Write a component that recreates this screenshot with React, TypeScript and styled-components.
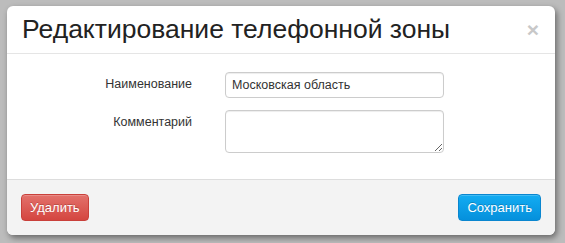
import styled, { createGlobalStyle } from 'styled-components';

const GlobalStyle = createGlobalStyle`
  html, body {
    margin: 0;
    padding: 0;
    background: #bcbcbc;
    font-family: "Liberation Sans", Arial, sans-serif;
  }
`;

const Page = styled.div`
  width: 565px;
  height: 243px;
  padding: 6px 0 0 7px;
  box-sizing: border-box;
`;

const Modal = styled.div`
  width: 548px;
  height: 229px;
  background: #fff;
  border-radius: 6px;
  box-shadow: 2px 3px 6px rgba(0, 0, 0, 0.45);
  display: flex;
  flex-direction: column;
  overflow: hidden;
`;

const ModalHeader = styled.div`
  height: 48px;
  box-sizing: border-box;
  padding: 0 15px;
  border-bottom: 1px solid #e5e5e5;
  display: flex;
  align-items: center;
  justify-content: space-between;
`;

const Title = styled.h3`
  margin: 0;
  font-size: 26.5px;
  font-weight: normal;
  color: #222;
  line-height: 30px;
  padding-bottom: 2px;
`;

const CloseButton = styled.button`
  border: none;
  background: none;
  padding: 0;
  margin-right: 1px;
  font-family: "Liberation Sans", Arial, sans-serif;
  font-size: 21px;
  font-weight: bold;
  line-height: 20px;
  color: #c8c8c8;
  cursor: pointer;
`;

const ModalBody = styled.div`
  flex: 1;
  padding: 18px 0 0;
  display: flex;
  flex-direction: column;
  gap: 12px;
`;

const FormRow = styled.div`
  display: grid;
  grid-template-columns: 185px 219px;
  column-gap: 33px;
  align-items: start;
`;

const Label = styled.label`
  text-align: right;
  font-size: 12.5px;
  color: #333;
  padding-top: 5px;
`;

const Input = styled.input`
  height: 26px;
  box-sizing: border-box;
  border: 1px solid #ccc;
  border-radius: 4px;
  padding: 0 6px;
  font-family: "Liberation Sans", Arial, sans-serif;
  font-size: 12.5px;
  color: #333;
  box-shadow: inset 0 1px 1px rgba(0, 0, 0, 0.075);
  outline: none;
`;

const TextArea = styled.textarea`
  height: 43px;
  box-sizing: border-box;
  border: 1px solid #ccc;
  border-radius: 4px;
  padding: 4px 6px;
  font-family: "Liberation Sans", Arial, sans-serif;
  font-size: 12.5px;
  box-shadow: inset 0 1px 1px rgba(0, 0, 0, 0.075);
  outline: none;
  margin: 0;
`;

const ModalFooter = styled.div`
  height: 56px;
  box-sizing: border-box;
  background: #f3f3f3;
  border-top: 1px solid #ddd;
  padding: 0 14px;
  display: flex;
  align-items: center;
  justify-content: space-between;
`;

const Button = styled.button<{ $variant: 'danger' | 'primary' }>`
  height: 27px;
  padding: 0 8px;
  border-radius: 4px;
  font-family: "Liberation Sans", Arial, sans-serif;
  font-size: 13px;
  color: #fff;
  text-shadow: 0 -1px 0 rgba(0, 0, 0, 0.2);
  cursor: pointer;
  border: 1px solid
    ${(p) => (p.$variant === 'danger' ? '#c9403a' : '#0a86cf')};
  background: ${(p) =>
    p.$variant === 'danger'
      ? 'linear-gradient(#e3716b, #d44640)'
      : 'linear-gradient(#13acf2, #0590dc)'};
  box-shadow: inset 0 1px 0 rgba(255, 255, 255, 0.2);
`;

const App: React.FC = () => {
  return (
    <>
      <GlobalStyle />
      <Page>
        <Modal>
          <ModalHeader>
            <Title>Редактирование телефонной зоны</Title>
            <CloseButton>×</CloseButton>
          </ModalHeader>
          <ModalBody>
            <FormRow>
              <Label>Наименование</Label>
              <Input defaultValue="Московская область" />
            </FormRow>
            <FormRow>
              <Label>Комментарий</Label>
              <TextArea />
            </FormRow>
          </ModalBody>
          <ModalFooter>
            <Button $variant="danger">Удалить</Button>
            <Button $variant="primary">Сохранить</Button>
          </ModalFooter>
        </Modal>
      </Page>
    </>
  );
};

export default App;
